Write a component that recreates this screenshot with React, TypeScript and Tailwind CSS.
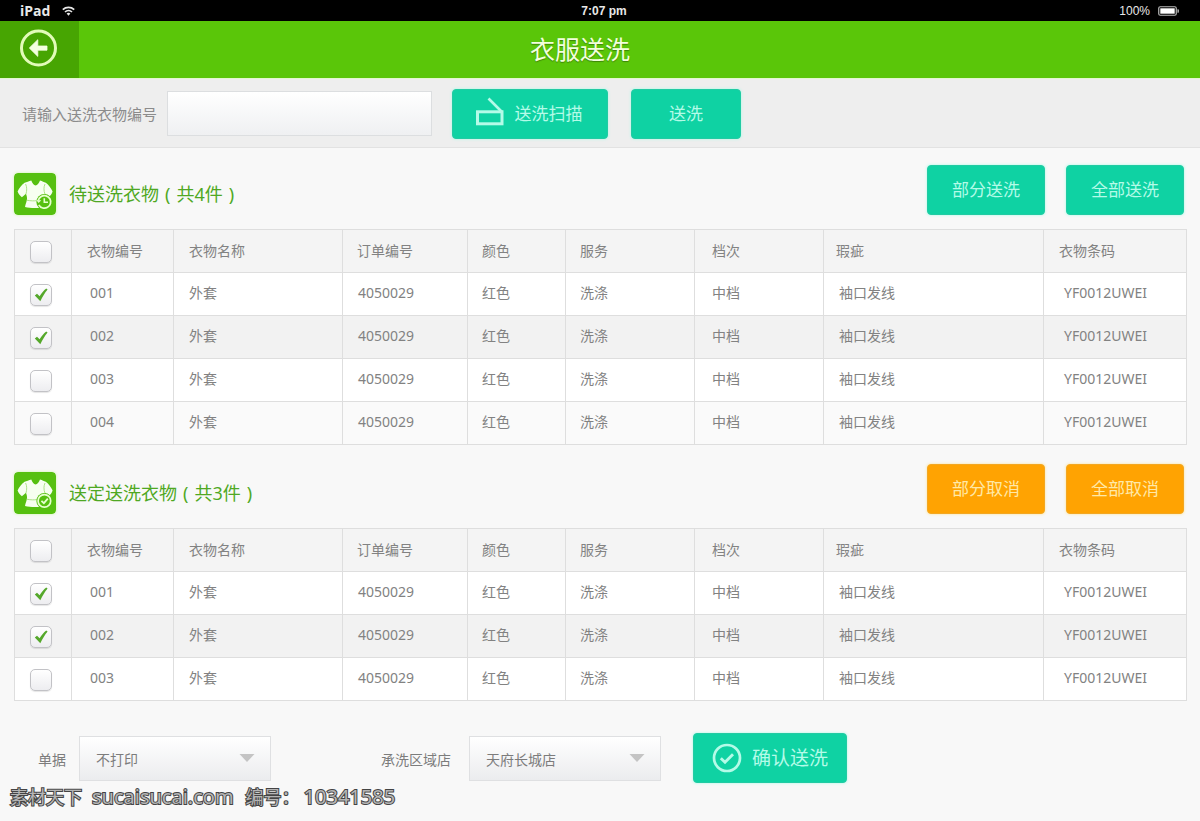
import { useId, useState } from "react";
import type { ReactNode } from "react";

type Garment = {
  code: string;
  name: string;
  order: string;
  color: string;
  service: string;
  grade: string;
  flaw: string;
  barcode: string;
  picked: boolean;
};

const garment = (code: string, picked: boolean): Garment => ({
  code,
  name: "外套",
  order: "4050029",
  color: "红色",
  service: "洗涤",
  grade: "中档",
  flaw: "袖口发线",
  barcode: "YF0012UWEI",
  picked,
});

const waiting = [garment("001", true), garment("002", true), garment("003", false), garment("004", false)];
const confirmed = [garment("001", true), garment("002", true), garment("003", false)];

const columns: { key: Exclude<keyof Garment, "picked">; label: string; col: string; head: string; body: string }[] = [
  { key: "code", label: "衣物编号", col: "w-[102px]", head: "pl-[15px]", body: "pl-[18px]" },
  { key: "name", label: "衣物名称", col: "w-[169px]", head: "pl-[15px]", body: "pl-[15px]" },
  { key: "order", label: "订单编号", col: "w-[125px]", head: "pl-[14px]", body: "pl-[15px]" },
  { key: "color", label: "颜色", col: "w-[98px]", head: "pl-[14px]", body: "pl-[14px]" },
  { key: "service", label: "服务", col: "w-[129px]", head: "pl-[14px]", body: "pl-[14px]" },
  { key: "grade", label: "档次", col: "w-[129px]", head: "pl-[17px]", body: "pl-[17px]" },
  { key: "flaw", label: "瑕疵", col: "w-auto", head: "pl-[12px]", body: "pl-[15px]" },
  { key: "barcode", label: "衣物条码", col: "w-[143px]", head: "pl-[15px]", body: "pl-[20px]" },
];

function StatusBar() {
  return (
    <div className="grid h-[21px] grid-cols-3 items-center bg-black pl-5 pr-5 text-[12px] leading-5 text-[#e8e8e8]">
      <div className="flex items-center gap-3">
        <span className="font-['Open_Sans','Noto_Sans',sans-serif] text-[14px] font-bold">iPad</span>
        <svg className="h-[10px] w-[13px]" viewBox="0 0 13 10" fill="none" stroke="currentColor" strokeWidth="1.7">
          <path d="M0.8 3.6C4 0.6 9 0.6 12.2 3.6" />
          <path d="M3 6C5 4.1 8 4.1 10 6" />
          <path d="M4.6 7.6a2.8 2.8 0 0 1 3.8 0L6.500 9.800Z" fill="currentColor" stroke="none" />
        </svg>
      </div>
      <div className="pl-2 text-center font-['Liberation_Sans',sans-serif] font-bold">7:07 pm</div>
      <div className="flex items-center justify-end gap-2 font-['Liberation_Sans',sans-serif]">
        <span>100%</span>
        <svg className="h-[10px] w-[22px]" viewBox="0 0 22 10">
          <rect x="0.750" y="0.750" width="17.500" height="8.500" rx="1.500" fill="none" stroke="#bbb" strokeWidth="1.200" />
          <rect x="2.300" y="2.300" width="14.400" height="5.400" fill="#fff" />
          <path d="M19.500 3.200h0.800c0.700 0 0.700 3.600 0 3.600h-0.800Z" fill="#ccc" />
        </svg>
      </div>
    </div>
  );
}

function Header() {
  return (
    <header className="flex h-[57px] bg-[#5ac609] text-[#f2ffdc]">
      <button type="button" aria-label="返回" className="flex w-[79px] items-center bg-[#47a502] pl-5 pb-1">
        <svg className="h-[38px] w-[38px] text-[#e2fbb9]" viewBox="0 0 38 38">
          <circle cx="18.500" cy="19" r="17" fill="none" stroke="currentColor" strokeWidth="3" />
          <path
            d="M9.300 19 17.800 10.700V17H27v4.200H17.800V27.400Z"
            fill="#f3ffdf"
            stroke="#f3ffdf"
            strokeWidth="0.800"
            strokeLinejoin="round"
          />
        </svg>
      </button>
      <h1 className="flex flex-1 items-center justify-center pr-[119px] text-[25px] leading-none text-shadow-[0_1px_1px_#00000055]">
        衣服送洗
      </h1>
    </header>
  );
}

function ActionButton({ tone, className = "", children }: { tone: "teal" | "orange"; className?: string; children: ReactNode }) {
  const colors =
    tone === "teal"
      ? "bg-[#0fd2a3] text-[#b4fbe8] border-[#22cba3] shadow-[0_0_3px_#a4fbe6]"
      : "bg-[#ffa302] text-[#ffe9a8] border-[#f3a722] shadow-[0_0_3px_#ffe38f]";
  return (
    <button
      type="button"
      className={`flex h-[50px] shrink-0 items-center justify-center rounded-[4px] border text-[17px] leading-6 ${colors} ${className}`}
    >
      {children}
    </button>
  );
}

function SearchBar() {
  const id = useId();
  return (
    <form
      className="flex h-[70px] items-center border-t border-b border-t-[#e3f8cf] border-b-[#e2e2e2] bg-[#eeeeee] pl-[22px] pt-px"
      onSubmit={(e) => e.preventDefault()}
    >
      <label htmlFor={id} className="text-[15px] leading-6 text-[#8b8b8b]">
        请输入送洗衣物编号
      </label>
      <input
        id={id}
        type="text"
        className="ml-[10px] h-[45px] w-[265px] border border-[#dcdee0] bg-linear-to-b from-white to-[#eff0f2] px-3 text-[15px] text-[#666] outline-none"
      />
      <ActionButton tone="teal" className="ml-5 w-[156px] gap-[11px] pr-[2px]">
        <svg className="h-7 w-7 overflow-visible" viewBox="0 0 28 28" fill="none" stroke="currentColor" strokeWidth="3">
          <rect x="1.500" y="11.800" width="24.500" height="12" />
          <path d="M12.500 -1.500 26 12" strokeWidth="2.600" />
        </svg>
        送洗扫描
      </ActionButton>
      <ActionButton tone="teal" className="ml-[23px] w-[110px]">
        送洗
      </ActionButton>
    </form>
  );
}

function ShirtIcon({ mark }: { mark: "clock" | "check" }) {
  return (
    <svg className="h-[42px] w-[42px] rounded-[4px] shadow-[0_0_3px_#cdf7a6]" viewBox="0 0 42 42">
      <rect width="42" height="42" rx="4" fill="#56c010" />
      <path
        d="M17.300 7.600C15 8.500 12.500 9 10.600 9.800C7.600 12 5 15.200 3.600 18.600C4.500 21.200 6 23 7.900 24.200L12 20.800C12.500 22.600 13.200 24.200 13 26C12.600 29 11.400 31.500 11 34C16 35.300 22 35.400 28 34.600L30 26C29.800 24.200 30.400 22.600 31 20.800L34.600 24.200C36.500 23 37.800 21.200 38.600 18.600C37 15.200 34.800 12 31.800 9.800C29.900 9 28.400 8.500 26 7.600C24.800 10.800 23.400 12.300 21.600 12.600C19.800 12.300 18.400 10.800 17.300 7.600Z"
        fill="#f7fff0"
      />
      <path
        d="M11.600 11C13 14 13 17.500 12 21M31 11C29.600 14 29.700 17.500 30.900 21M12.800 27.200C17 28 20 28 23 27.600"
        fill="none"
        stroke="#a5de7d"
        strokeWidth="0.900"
      />
      <circle cx="30.400" cy="28.900" r="8" fill="#56c010" />
      <circle
        cx="30.400"
        cy="28.900"
        r="6.300"
        fill="none"
        stroke="#e6ffce"
        strokeWidth="1.700"
        strokeDasharray={mark === "clock" ? "34 6" : undefined}
        transform={mark === "clock" ? "rotate(-165 30.400 28.900)" : undefined}
      />
      {mark === "clock" ? (
        <g fill="none" stroke="#e6ffce" strokeWidth="1.600">
          <path d="M30.300 25.300V29.300H34" />
          <path d="M22.200 27 24.600 29.900 27.300 27.200Z" fill="#e6ffce" stroke="none" />
        </g>
      ) : (
        <path d="M27.400 28.800 29.900 31.200 33.800 26.700" fill="none" stroke="#e6ffce" strokeWidth="1.800" />
      )}
    </svg>
  );
}

function Tick({ label, checked, onChange }: { label: string; checked: boolean; onChange: () => void }) {
  return (
    <label className="inline-grid place-items-center align-middle">
      <input
        type="checkbox"
        aria-label={label}
        checked={checked}
        onChange={onChange}
        className="peer col-start-1 row-start-1 h-[22px] w-[22px] appearance-none rounded-[5px] border border-[#c2c2c6] bg-linear-to-b from-white to-[#ededf0] shadow-[0_1px_1px_#0000001a]"
      />
      <svg
        className="pointer-events-none col-start-1 row-start-1 hidden h-[14px] w-[14px] peer-checked:block"
        viewBox="0 0 14 14"
      >
        <path d="M0.800 7.600 3 5.700 5.600 8.200C7.500 5.200 9.800 2.400 12.200 0.500L13.600 1.600C10.900 4.900 8.500 8.900 6.300 13.300Z" fill="#55a82b" />
      </svg>
    </label>
  );
}

const stripes = ["bg-white", "bg-[#f2f2f2]", "bg-white", "bg-[#fafafa]"];

function GarmentTable({ caption, rows }: { caption: string; rows: Garment[] }) {
  const [picked, setPicked] = useState(rows.map((r) => r.picked));
  const all = picked.every(Boolean);
  return (
    <table
      aria-label={caption}
      className="mt-[14px] w-full table-fixed border-separate border-spacing-0 border-t border-l border-[#dedede] text-left text-[14px] leading-5 text-[#828282]"
    >
      <colgroup>
        <col className="w-[57px]" />
        {columns.map((c) => (
          <col key={c.key} className={c.col} />
        ))}
      </colgroup>
      <thead>
        <tr className="bg-[#f4f4f4]">
          <th className="h-[43px] border-r border-b border-[#dedede] p-0 pr-[4px] pt-[2px] text-center">
            <Tick label="全选" checked={all} onChange={() => setPicked(picked.map(() => !all))} />
          </th>
          {columns.map((c) => (
            <th key={c.key} scope="col" className={`h-[43px] border-r border-b border-[#dedede] p-0 font-normal ${c.head}`}>
              {c.label}
            </th>
          ))}
        </tr>
      </thead>
      <tbody>
        {rows.map((row, i) => (
          <tr key={row.code} className={stripes[i % 4]}>
            <td className="h-[43px] border-r border-b border-[#dedede] p-0 pr-[4px] pt-[2px] text-center">
              <Tick
                label={row.code}
                checked={picked[i]}
                onChange={() => setPicked(picked.map((p, j) => (j === i ? !p : p)))}
              />
            </td>
            {columns.map((c) => (
              <td key={c.key} className={`h-[43px] border-r border-b border-[#dedede] p-0 pb-[2px] ${c.body}`}>
                {row[c.key]}
              </td>
            ))}
          </tr>
        ))}
      </tbody>
    </table>
  );
}

function Section({
  title,
  mark,
  tone,
  actions,
  rows,
}: {
  title: string;
  mark: "clock" | "check";
  tone: "teal" | "orange";
  actions: string[];
  rows: Garment[];
}) {
  return (
    <section>
      <div className="flex items-end justify-between pr-[3px]">
        <div className="flex items-center gap-[13px]">
          <ShirtIcon mark={mark} />
          <h2 className="text-[18px] leading-6 text-[#4fa823]">
            {title}
            <span className="px-[6px]">(</span>共{rows.length}件<span className="px-[6px]">)</span>
          </h2>
        </div>
        <div className="flex gap-[21px]">
          {actions.map((a) => (
            <ActionButton key={a} tone={tone} className="w-[118px]">
              {a}
            </ActionButton>
          ))}
        </div>
      </div>
      <GarmentTable caption={title} rows={rows} />
    </section>
  );
}

function Picker({ label, options, gap }: { label: string; options: string[]; gap: string }) {
  const id = useId();
  return (
    <div className={`flex items-center text-[14px] leading-5 text-[#7c7c7c] ${gap}`}>
      <label htmlFor={id} className="pt-[3px]">
        {label}
      </label>
      <div className="grid items-center">
        <select
          id={id}
          className="col-start-1 row-start-1 h-[45px] w-[192px] appearance-none border border-[#dfe0e2] bg-linear-to-b from-white to-[#ebecee] pt-[3px] pl-4 pr-10 outline-none"
        >
          {options.map((o) => (
            <option key={o}>{o}</option>
          ))}
        </select>
        <svg
          className="pointer-events-none col-start-1 row-start-1 mr-4 h-2 w-4 justify-self-end"
          viewBox="0 0 16 8"
          fill="#c4c4c4"
        >
          <path d="M0.500 0H15.500L8 8Z" />
        </svg>
      </div>
    </div>
  );
}

export default function App() {
  return (
    <div className="min-h-screen bg-[#f8f8f8] font-['Noto_Sans','Noto_Sans_CJK_SC',sans-serif]">
      <StatusBar />
      <Header />
      <SearchBar />
      <main className="flex flex-col gap-[19px] pt-[17px] pl-[14px] pr-[13px]">
        <Section
          title="待送洗衣物"
          mark="clock"
          tone="teal"
          actions={["部分送洗", "全部送洗"]}
          rows={waiting}
        />
        <Section
          title="送定送洗衣物"
          mark="check"
          tone="orange"
          actions={["部分取消", "全部取消"]}
          rows={confirmed}
        />
      </main>
      <form className="mt-8 flex items-center pl-[38px]" onSubmit={(e) => e.preventDefault()}>
        <Picker label="单据" options={["不打印", "打印"]} gap="gap-[13px]" />
        <div className="ml-[110px]">
          <Picker label="承洗区域店" options={["天府长城店"]} gap="gap-[18px]" />
        </div>
        <ActionButton tone="teal" className="ml-8 w-[154px] gap-[10px]">
          <svg className="h-[30px] w-[30px]" viewBox="0 0 30 30" fill="none" stroke="currentColor">
            <circle cx="15" cy="15" r="13" strokeWidth="2.700" />
            <path d="M8.800 15.200 13 19.200 21 11.200" strokeWidth="2.900" />
          </svg>
          <span className="text-[19px]">确认送洗</span>
        </ActionButton>
      </form>
      <footer className="flex items-baseline pl-[10px] text-[20px] leading-7 text-[#b5b5b5] [-webkit-text-stroke:2px_#444] [paint-order:stroke_fill]">
        <span className="text-[18px]">素材天下</span>
        <span className="ml-[10px]">sucaisucai.com</span>
        <span className="ml-3 text-[18px]">编号：</span>
        <span className="ml-1">10341585</span>
      </footer>
    </div>
  );
}
